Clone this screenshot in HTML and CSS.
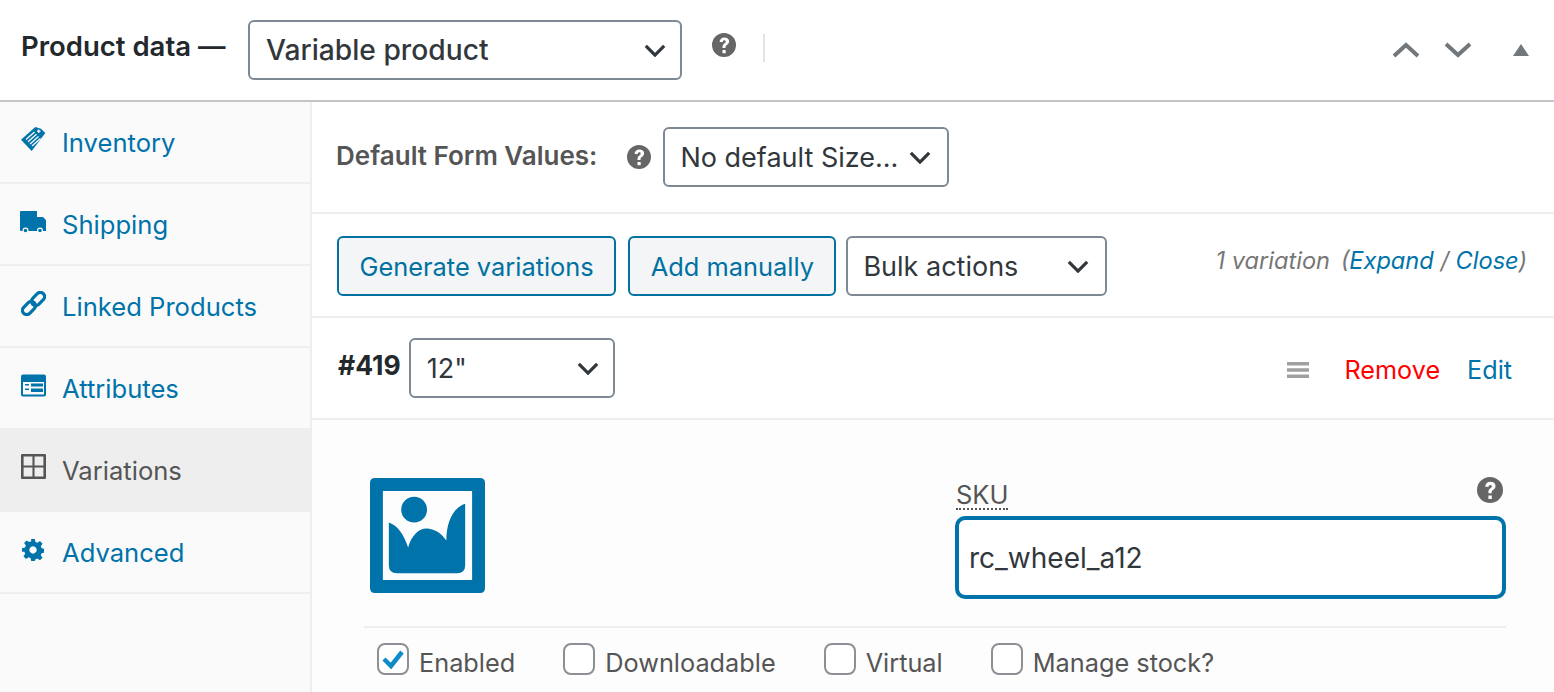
FILE: index.html
```html
<!DOCTYPE html>
<html lang="en">
<head>
    <meta charset="UTF-8">
    <meta name="viewport" content="width=device-width, initial-scale=1.0">
    <title>Product data</title>
    <link rel="stylesheet" href="styles.css">
</head>
<body>

<header class="topbar">
    <h2 class="topbar-title">Product data —</h2>
    <div class="select select-type">
        <span>Variable product</span>
        <svg class="chev" viewBox="0 0 24 14"><path d="M2 2l10 10L22 2"/></svg>
    </div>
    <svg class="help help-top" viewBox="0 0 24 24"><use href="#help"/></svg>
    <span class="topbar-sep"></span>
    <div class="topbar-arrows">
        <svg class="arrow" viewBox="0 0 28 16"><path d="M2 14L14 3l12 11"/></svg>
        <svg class="arrow" viewBox="0 0 28 16"><path d="M2 2l12 11L26 2"/></svg>
        <svg class="toggle" viewBox="0 0 16 12"><path d="M8 0l8 12H0z"/></svg>
    </div>
</header>

<div class="panel">
    <nav class="tabs">
        <a class="tab tab-inventory" href="#">
            <svg class="tab-icon" viewBox="0 0 25 25">
                <path d="M0 12.700L14.300 0l5.700 1.700 4.300 4.300L10.700 24z"/>
                <path class="cut" d="M5 12.500l8.500-7.500M7 14.700l8.500-7.500M9 16.900l8.500-7.500M11 19.100l8.500-7.500M16 4.200h3.500M17.700 2.500v3.500"/>
            </svg>
            <span>Inventory</span>
        </a>
        <a class="tab tab-shipping" href="#">
            <svg class="tab-icon tab-icon-wide" viewBox="0 0 26 22">
                <path d="M0 1q0-1 1-1h16v6h6l3 3v11H1q-1 0-1-1z"/>
                <circle class="wheel" cx="5.500" cy="19.500" r="2.400"/>
                <circle class="wheel" cx="20" cy="19.500" r="2.400"/>
            </svg>
            <span>Shipping</span>
        </a>
        <a class="tab tab-linked" href="#">
            <svg class="tab-icon tab-icon-link" viewBox="-1.500 -1.500 25 25">
                <rect x="-1" y="11.250" width="15" height="8.500" rx="4.250" transform="rotate(-45 6.500 15.500)"/>
                <rect x="8" y="2.250" width="15" height="8.500" rx="4.250" transform="rotate(-45 15.500 6.500)"/>
            </svg>
            <span>Linked Products</span>
        </a>
        <a class="tab tab-attributes" href="#">
            <svg class="tab-icon" viewBox="0 0 25 22"><path fill-rule="evenodd" d="M2 0h21q2 0 2 2v18q0 2-2 2H2q-2 0-2-2V2q0-2 2-2zM2 7.500V20h21V7.500zM4 9.500h4V11H4zM10 9h12v3H10zM4 14h4v1.500H4zM10 14h12v3.500H10z"/></svg>
            <span>Attributes</span>
        </a>
        <a class="tab tab-active" href="#">
            <svg class="tab-icon" viewBox="0 0 24 24"><path fill-rule="evenodd" d="M1 0h22q1 0 1 1v22q0 1-1 1H1q-1 0-1-1V1q0-1 1-1zM2.500 2.500V11H11V2.500zM13 2.500V11h8.500V2.500zM2.500 13v8.500H11V13zM13 13v8.500h8.500V13z"/></svg>
            <span>Variations</span>
        </a>
        <a class="tab tab-advanced" href="#">
            <svg class="tab-icon tab-icon-gear" viewBox="0 0 24 24"><path fill-rule="evenodd" d="M10 0h4l.7 3.300 2.100.9L19.600 2.300l2.800 2.800-1.900 2.900.9 2.100 3.300.7v4l-3.300.7-.9 2.100 1.900 2.800-2.800 2.800-2.800-1.900-2.100.9L14 24h-4l-.7-3.300-2.100-.9-2.800 1.900-2.800-2.800 1.900-2.800-.9-2.100L0 14v-4l3.300-.7.9-2.100-1.900-2.900 2.800-2.800 2.800 1.900 2.100-.9zM12 8a4 4 0 1 0 .1 0z"/></svg>
            <span>Advanced</span>
        </a>
    </nav>

    <main class="content">
        <section class="row row-defaults">
            <b class="defaults-label">Default Form Values:</b>
            <svg class="help help-small" viewBox="0 0 24 24"><use href="#help"/></svg>
            <div class="select select-size">
                <span>No default Size...</span>
                <svg class="chev" viewBox="0 0 24 14"><path d="M2 2l10 10L22 2"/></svg>
            </div>
        </section>

        <section class="row row-toolbar">
            <a class="btn" href="#">Generate variations</a>
            <a class="btn" href="#">Add manually</a>
            <div class="select select-bulk">
                <span>Bulk actions</span>
                <svg class="chev" viewBox="0 0 24 14"><path d="M2 2l10 10L22 2"/></svg>
            </div>
            <p class="count">1 variation <span class="count-links">(<a href="#">Expand</a> / <a href="#">Close</a>)</span></p>
        </section>

        <section class="row row-variation">
            <b class="var-id">#419</b>
            <div class="select select-var">
                <span>12"</span>
                <svg class="chev" viewBox="0 0 24 14"><path d="M2 2l10 10L22 2"/></svg>
            </div>
            <svg class="drag" viewBox="0 0 22 16"><path d="M0 0h22v3.500H0zM0 6.200h22v3.500H0zM0 12.500h22V16H0z"/></svg>
            <a class="remove" href="#">Remove</a>
            <a class="edit" href="#">Edit</a>
        </section>

        <section class="details">
            <div class="details-top">
                <svg class="thumb" viewBox="0 0 116 116">
                    <path fill-rule="evenodd" d="M5 0h106q5 0 5 5v106q0 5-5 5H5q-5 0-5-5V5q0-5 5-5zM13 13v90h90V13z"/>
                    <circle cx="44.500" cy="32" r="13"/>
                    <path d="M19 45C28 48 34 57 38.500 70 42 58 49 51 57 51 65 51 72 56 77 63 77 44 84 30 96 26V88Q96 96 88 96H27Q19 96 19 88z"/>
                </svg>
                <div class="sku">
                    <div class="sku-head">
                        <label class="sku-label">SKU</label>
                        <svg class="help help-sku" viewBox="0 0 24 24"><use href="#help"/></svg>
                    </div>
                    <input class="sku-input" type="text" value="rc_wheel_a12">
                </div>
            </div>
            <div class="options">
                <label class="opt"><span class="box"><svg viewBox="0 0 24 20"><path d="M3 10l7 7L21 3"/></svg></span><span class="opt-text">Enabled</span></label>
                <label class="opt"><span class="box"></span><span class="opt-text">Downloadable</span></label>
                <label class="opt"><span class="box"></span><span class="opt-text">Virtual</span></label>
                <label class="opt"><span class="box"></span><span class="opt-text">Manage stock?</span></label>
            </div>
        </section>
    </main>
</div>

<svg class="defs" width="0" height="0">
    <symbol id="help" viewBox="0 0 24 24">
        <path fill-rule="evenodd" d="M12 0a12 12 0 1 1 0 24a12 12 0 0 1 0-24zM10.500 17v3.300h3.200V17zM7.500 8.800l3 .5c.2-1.300.8-2 1.700-2 1 0 1.500.5 1.500 1.300 0 .7-.4 1.100-1.300 1.800-1.500 1.100-1.900 2-1.900 4v.6h3v-.5c0-1.200.3-1.700 1.400-2.500 1.500-1.100 2.200-2.100 2.200-3.700 0-2.500-1.900-3.900-4.800-3.900-2.700 0-4.500 1.500-4.800 4.900z"/>
    </symbol>
</svg>

</body>
</html>
```

FILE: styles.css
```css
* {
    box-sizing: border-box;
}
html, body {
    height: 692px;
    overflow: hidden;
}
body {
    margin: 0;
    font-family: Inter, "Noto Sans", sans-serif;
    font-size: 25.400px;
    color: #32373c;
    background: #fff;
}
a {
    color: #0073aa;
    text-decoration: none;
}
.defs {
    display: block;
}

/* top bar */
.topbar {
    display: flex;
    align-items: center;
    height: 102px;
    padding: 0 25px 0 21px;
    border-bottom: 2px solid #c3c4c7;
}
.topbar-title {
    width: 227px;
    margin: 0 0 8px 0;
    font-size: 27.500px;
    font-weight: 600;
    white-space: nowrap;
    color: #23282d;
}
.topbar-sep {
    width: 2px;
    height: 28px;
    margin: 0 0 4px 27px;
    background: #e2e4e7;
}
.topbar-arrows {
    display: flex;
    align-items: center;
    margin-left: auto;
}
.arrow {
    width: 28px;
    height: 16px;
    margin-right: 24px;
    fill: none;
    stroke: #72777c;
    stroke-width: 4;
}
.arrow + .arrow {
    margin-right: 41px;
}
.toggle {
    width: 16px;
    height: 12px;
    fill: #72777c;
}
.help {
    fill: #666;
    flex-shrink: 0;
}
.help-top {
    width: 24px;
    height: 24px;
    margin: 0 0 10px 30px;
}
.help-small {
    width: 24px;
    height: 24px;
}

/* selects */
.select {
    display: flex;
    align-items: center;
    justify-content: space-between;
    height: 60px;
    padding: 0 16px 0 15px;
    font-size: 27px;
    background: #fff;
    border: 2px solid #7e8993;
    border-radius: 6px;
    color: #32373c;
    white-space: nowrap;
}
.chev {
    width: 22px;
    height: 13px;
    fill: none;
    stroke: #32373c;
    stroke-width: 3.500;
}
.select-type {
    width: 434px;
    padding: 0 14px 0 16px;
    font-size: 28.200px;
    font-weight: 500;
}
.select-size {
    width: 286px;
}
.select-bulk {
    width: 261px;
    margin-left: -2px;
}
.select-var {
    width: 206px;
    padding: 0 14px 0 16px;
}

/* layout */
.panel {
    display: flex;
    height: 590px;
}
.tabs {
    width: 312px;
    background: #fafafa;
    border-right: 2px solid #eee;
}
.tab {
    display: flex;
    align-items: center;
    gap: 16px;
    height: 82px;
    padding: 0 0 0 21px;
    font-size: 25.600px;
    border-bottom: 2px solid #eee;
}
.tab-attributes {
    height: 80px;
    border-bottom: 0;
}
.tab-active {
    height: 84px;
    border-bottom: 0;
    background: #eee;
    color: #555;
}
.tab-advanced {
    padding-top: 1px;
}
.tab-icon {
    width: 25px;
    height: 25px;
    margin-bottom: 6px;
    fill: #0073aa;
}
.tab-shipping .tab-icon {
    margin-bottom: 4px;
}
.tab-linked .tab-icon {
    margin-bottom: 5px;
}
.tab-active .tab-icon {
    margin-bottom: 8px;
    fill: #555;
}
.cut {
    fill: none;
    stroke: #fafafa;
    stroke-width: 1.300;
}
.wheel {
    stroke: #fafafa;
    stroke-width: 1.200;
}
.tab-icon-wide {
    width: 26px;
    height: 22px;
    margin-left: -1px;
}
.tab-icon-link {
    fill: none;
    stroke: #0073aa;
    stroke-width: 3.200;
}
.tab-icon-gear {
    width: 22px;
    height: 22px;
    margin: 0 2px 6px 1px;
}
.content {
    flex: 1;
    min-width: 0;
}
.row {
    display: flex;
    align-items: center;
    border-bottom: 2px solid #eee;
}
.row-defaults {
    height: 112px;
    padding: 0 0 0 24px;
}
.defaults-label {
    font-size: 26px;
    font-weight: 600;
    color: #555;
    margin-bottom: 4px;
    white-space: nowrap;
}
.row-defaults .help {
    margin: 0 12px 0 30px;
}
.row-toolbar {
    height: 104px;
    padding: 2px 27px 0 25px;
    gap: 12px;
}
.btn {
    display: flex;
    align-items: center;
    height: 60px;
    padding: 0 20.500px;
    background: #f3f5f6;
    border: 2px solid #0071a1;
    border-radius: 6px;
    color: #0071a1;
    white-space: nowrap;
}
.count {
    margin: 0 0 12px auto;
    font-size: 23.600px;
    font-style: italic;
    color: #777;
    white-space: nowrap;
}
.count-links {
    margin-left: 4px;
}
.row-variation {
    height: 102px;
    padding: 0 42px 0 26px;
}
.var-id {
    font-size: 26.500px;
    font-weight: 700;
    color: #23282d;
    margin: 0 8px 6px 0;
}
.drag {
    width: 22px;
    height: 16px;
    margin: 4px 36px 0 auto;
    fill: #a0a0a0;
}
.remove {
    color: #f00;
    font-size: 25.200px;
    margin: 4px 27px 0 0;
}
.edit {
    font-size: 25.200px;
    margin-top: 4px;
}

/* variation details */
.details {
    height: 272px;
    padding: 58px 48px 0 52px;
    background: #fdfdfd;
}
.details-top {
    display: flex;
    justify-content: space-between;
    height: 150px;
    border-bottom: 2px solid #eee;
}
.thumb {
    width: 115px;
    height: 115px;
    margin: 0 0 0 6px;
    fill: #0073aa;
}
.sku {
    width: 551px;
}
.sku-head {
    display: flex;
    justify-content: space-between;
    align-items: flex-start;
    height: 38px;
    padding-right: 3px;
}
.sku-label {
    margin-left: 1px;
    height: 32px;
    font-size: 25.500px;
    line-height: 34px;
    color: #555;
    border-bottom: 2px dotted #555;
}
.help-sku {
    width: 26px;
    height: 26px;
    margin-top: -1px;
}
.sku-input {
    display: block;
    width: 100%;
    height: 83px;
    padding: 0 10px;
    font: inherit;
    font-size: 28px;
    color: #32373c;
    background: #fff;
    border: 4px solid #0073aa;
    border-radius: 10px;
    outline: 0;
}
.options {
    display: flex;
    gap: 48px;
    margin-left: 13px;
    padding-top: 15px;
}
.opt {
    display: flex;
    align-items: flex-start;
    gap: 10px;
    font-size: 25.300px;
    color: #555;
}
.opt-text {
    margin-top: 4px;
}
.box {
    display: flex;
    align-items: center;
    justify-content: center;
    width: 32px;
    height: 32px;
    background: #fff;
    border: 2px solid #8c8f94;
    border-radius: 8px;
}
.box svg {
    width: 24px;
    height: 20px;
    fill: none;
    stroke: #0e8ac9;
    stroke-width: 4.500;
}
```
